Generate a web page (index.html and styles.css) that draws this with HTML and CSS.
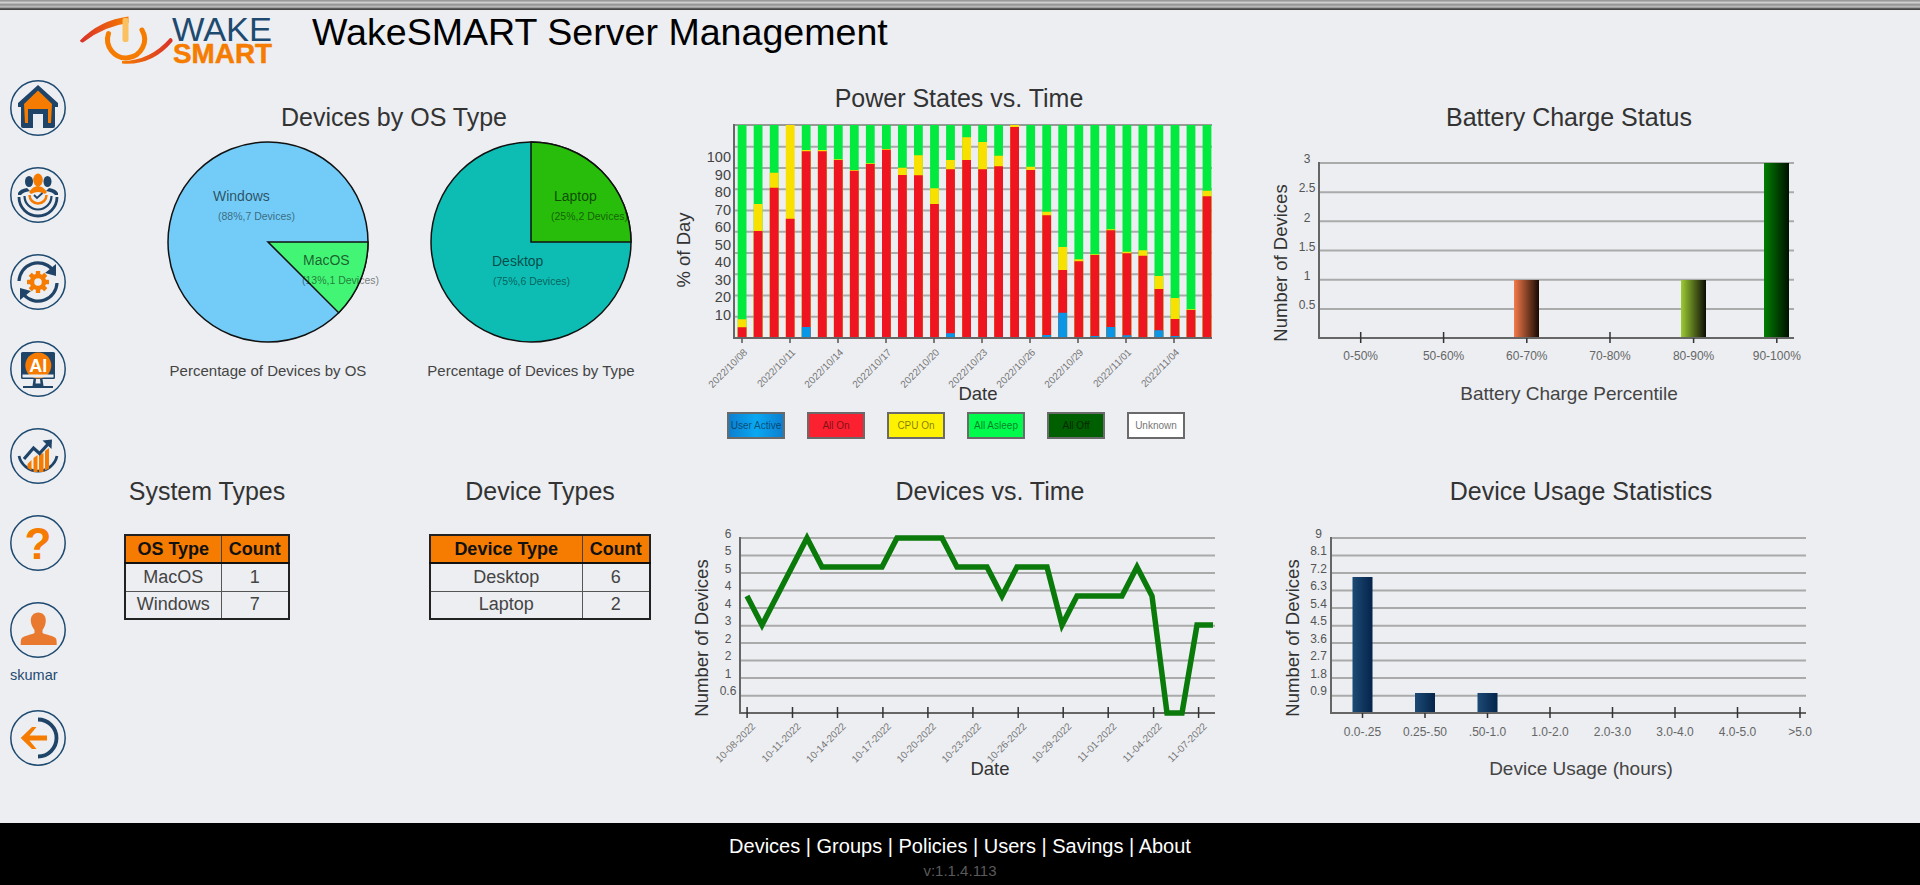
FILE: index.html
```html
<!DOCTYPE html>
<html lang="en">
<head>
<meta charset="utf-8">
<title>WakeSMART Server Management</title>
<link rel="stylesheet" href="styles.css">
</head>
<body>
<div class="page">
  <div class="topbar"></div>
  <header class="header">
    <svg class="logo" viewBox="78 10 196 60" aria-label="WakeSMART logo">
      <defs>
        <linearGradient id="swoosh" x1="0" x2="1" y1="0" y2="0"><stop offset="0" stop-color="#d9302a"/><stop offset="1" stop-color="#f57c00"/></linearGradient>
        <linearGradient id="tail" x1="0" x2="1" y1="0" y2="0"><stop offset="0" stop-color="#f57c00"/><stop offset="1" stop-color="#d9302a"/></linearGradient>
      </defs>
      <path d="M80 40.5Q100 20 128.5 16.500L128.500 23Q104 26 83 42.500Q80.500 43 80 40.500Z" fill="url(#swoosh)"/>
      <path d="M108.500 33.500A18.500 18.500 0 1 0 142 30" fill="none" stroke="#f57c00" stroke-width="5" stroke-linecap="round"/>
      <path d="M122 61Q150 61 170 38Q173 38 172.500 41.500Q152 66 122 63.500Z" fill="url(#tail)"/>
      <rect x="122.500" y="18" width="6" height="24" rx="2" fill="#fbc060"/>
      <text class="logo-wake" x="172" y="41" textLength="100" lengthAdjust="spacingAndGlyphs">WAKE</text>
      <text class="logo-smart" x="173" y="63" textLength="99" lengthAdjust="spacingAndGlyphs">SMART</text>
    </svg>
    <h1 class="app-title">WakeSMART Server Management</h1>
  </header>

  <div class="main">
    <nav class="sidebar">
      <a class="nav-item" href="#"><svg class="nav-icon" viewBox="0 0 56 56">
        <circle class="ring" cx="28" cy="28" r="27.200"/>
        <path class="ink" d="M28 5L48 23V27H45V46Q45 48 43 48H13Q11 48 11 46V27H8V23Z"/>
        <path class="accent" d="M28 10.500L42 24L41 43H15L14 24Z"/>
        <path class="ink" d="M18 48V29H38V48Z"/>
        <rect class="paper" x="23" y="34" width="10" height="14"/>
      </svg></a>
      <a class="nav-item" href="#"><svg class="nav-icon" viewBox="0 0 56 56">
        <circle class="ring" cx="28" cy="28" r="27.200"/>
        <ellipse class="ink" cx="19" cy="14.500" rx="4" ry="5.500"/>
        <ellipse class="ink" cx="37.500" cy="14.500" rx="4" ry="5.500"/>
        <path class="ink" d="M8 26Q10 22 17 21L20 24Q13 25 11 28H8ZM48 26Q46 22 39 21L36 24Q43 25 45 28H48Z"/>
        <ellipse class="accent" cx="28" cy="13" rx="4.800" ry="6.500"/>
        <path class="accent" d="M19 25Q23 19 28 19Q33 19 37 25L35 27Q28 23 21 27Z"/>
        <path class="line-accent" d="M19.500 28A8.500 8.500 0 0 0 36.500 28"/>
        <path class="line-thin" d="M14.500 29A13.500 13.500 0 0 0 41.500 29"/>
        <path class="line-ink" d="M9 30A19 19 0 0 0 47 30"/>
        <path class="line-check" d="M24 28L27 31L32.500 26"/>
      </svg></a>
      <a class="nav-item" href="#"><svg class="nav-icon" viewBox="0 0 56 56">
        <circle class="ring" cx="28" cy="28" r="27.200"/>
        <path class="line-ink-m" d="M9 27A19 19 0 0 1 42 15"/>
        <path class="ink" d="M46 10L46 22L35 19Z"/>
        <path class="line-ink-m" d="M47 29A19 19 0 0 1 14 41"/>
        <path class="ink" d="M10 46L10 34L21 37Z"/>
        <g class="accent">
          <rect x="25.800" y="17" width="4.400" height="22" rx="0.500"/>
          <rect x="25.800" y="17" width="4.400" height="22" rx="0.500" transform="rotate(45 28 28)"/>
          <rect x="25.800" y="17" width="4.400" height="22" rx="0.500" transform="rotate(90 28 28)"/>
          <rect x="25.800" y="17" width="4.400" height="22" rx="0.500" transform="rotate(135 28 28)"/>
        </g>
        <circle class="gear-body" cx="28" cy="28" r="6"/>
      </svg></a>
      <a class="nav-item" href="#"><svg class="nav-icon" viewBox="0 0 56 56">
        <circle class="ring" cx="28" cy="28" r="27.200"/>
        <rect class="ink" x="11" y="11" width="34" height="27" rx="1.500"/>
        <circle class="accent" cx="28.300" cy="24.500" r="13"/>
        <rect class="paper" x="12.500" y="33.500" width="31" height="3"/>
        <text class="ai-text" x="28.300" y="31">AI</text>
        <path class="ink" d="M23.500 38H26L25.500 42.500H30.500L30 38H32.500L33.500 45H22.500Z"/>
        <rect class="ink" x="13" y="45" width="30" height="2"/>
      </svg></a>
      <a class="nav-item" href="#"><svg class="nav-icon" viewBox="0 0 56 56">
        <circle class="ring" cx="28" cy="28" r="27.200"/>
        <path class="line-ink" d="M9 28A19.500 19.500 0 0 0 47 28"/>
        <path class="accent" d="M17.500 36L21.500 32V42.500L17.500 40ZM23.500 30L27.500 27V44H23.500ZM29 27L33.500 25V44L29 44ZM35 23L39 20V40.500L35 42.500Z"/>
        <path class="line-ink-m" d="M14 31L23.500 20L29.500 25.500L39 15"/>
        <path class="ink" d="M32.500 12.500L42 11.500L41.500 21Z"/>
      </svg></a>
      <a class="nav-item" href="#"><svg class="nav-icon" viewBox="0 0 56 56">
        <circle class="ring" cx="28" cy="28" r="27.200"/>
        <text class="q-text" x="28" y="44">?</text>
      </svg></a>
      <div class="nav-user">
        <a class="nav-item" href="#"><svg class="nav-icon" viewBox="0 0 56 56">
          <circle class="ring" cx="28" cy="28" r="27.200"/>
          <path class="person" d="M28.300 10.500C33 10.500 36 14 35.800 19C35.600 23 34 26 32.500 28V31C36 33 44 33.500 46 36.500C46.700 38 46.700 41 46.700 43H10.700C10.700 41 10.700 38 11.500 36.500C13.500 33.500 21 33 24.500 31V28C23 26 21 23 20.800 19C20.600 14 23.600 10.500 28.300 10.500Z"/>
        </svg></a>
        <span class="user-name">skumar</span>
      </div>
      <a class="nav-item" href="#"><svg class="nav-icon" viewBox="0 0 56 56">
        <circle class="ring" cx="28" cy="28" r="27.200"/>
        <path class="line-ink-arc" d="M28 9.500A18.500 18.500 0 0 1 28 46.500"/>
        <path class="accent" d="M10.700 28L22 17H26.500L19.500 25.500H37V30.500H19.500L26.500 39H22Z"/>
      </svg></a>
    </nav>

    <div class="content">
      <section class="row row-top">
        <svg class="chart chart-pies" viewBox="110 80 570 390">
          <text class="chart-title" x="394" y="126">Devices by OS Type</text>
          <circle class="pie-edge pie-win" cx="268" cy="242" r="100"/>
          <path class="pie-edge pie-mac" d="M268 242H368A100 100 0 0 1 338.700 312.700Z"/>
          <text class="pie-label" x="213" y="201">Windows</text>
          <text class="pie-sub" x="218" y="220">(88%,7 Devices)</text>
          <text class="pie-label" x="303" y="265">MacOS</text>
          <text class="pie-sub" x="302" y="284">(13%,1 Devices)</text>
          <text class="pie-caption" x="268" y="376">Percentage of Devices by OS</text>
          <circle class="pie-edge pie-desk" cx="531" cy="242" r="100"/>
          <path class="pie-edge pie-lap" d="M531 242V142A100 100 0 0 1 631 242Z"/>
          <text class="pie-label" x="554" y="201">Laptop</text>
          <text class="pie-sub" x="551" y="220">(25%,2 Devices)</text>
          <text class="pie-label" x="492" y="266">Desktop</text>
          <text class="pie-sub" x="493" y="285">(75%,6 Devices)</text>
          <text class="pie-caption" x="531" y="376">Percentage of Devices by Type</text>
        </svg>

        <div class="power-panel">
          <svg class="chart chart-power" viewBox="680 80 570 326">
            <text class="chart-title" x="959" y="107">Power States vs. Time</text>
            <path class="grid" d="M734 146.700H1212M734 168H1212M734 189.200H1212M734 210.500H1212M734 231.700H1212M734 253H1212M734 274.200H1212M734 295.500H1212M734 316.700H1212"/>
            <path class="axis-soft" d="M734 125H1212"/>
            <path class="seg-green" d="M737.700 125h8.800V337h-8.800zM753.700 125h8.800V337h-8.800zM769.800 125h8.800V337h-8.800zM801.800 125h8.800V337h-8.800zM817.900 125h8.800V337h-8.800zM833.900 125h8.800V337h-8.800zM849.900 125h8.800V337h-8.800zM865.900 125h8.800V337h-8.800zM882 125h8.800V337h-8.800zM898 125h8.800V337h-8.800zM914 125h8.800V337h-8.800zM930.100 125h8.800V337h-8.800zM946.100 125h8.800V337h-8.800zM962.200 125h8.800V337h-8.800zM978.200 125h8.800V337h-8.800zM994.200 125h8.800V337h-8.800zM1026.300 125h8.800V337h-8.800zM1042.300 125h8.800V337h-8.800zM1058.300 125h8.800V337h-8.800zM1074.400 125h8.800V337h-8.800zM1090.400 125h8.800V337h-8.800zM1106.400 125h8.800V337h-8.800zM1122.500 125h8.800V337h-8.800zM1138.500 125h8.800V337h-8.800zM1154.500 125h8.800V337h-8.800zM1170.600 125h8.800V337h-8.800zM1186.600 125h8.800V337h-8.800zM1202.600 125h8.800V337h-8.800z"/>
            <path class="seg-yellow" d="M737.700 319.300h8.800V337h-8.800zM753.700 204h8.800V337h-8.800zM769.800 172.700h8.800V337h-8.800zM785.800 125h8.800V337h-8.800zM801.800 150h8.800V337h-8.800zM817.900 150h8.800V337h-8.800zM833.900 159.300h8.800V337h-8.800zM849.900 170h8.800V337h-8.800zM865.900 163.300h8.800V337h-8.800zM882 149h8.800V337h-8.800zM898 167.700h8.800V337h-8.800zM914 155.300h8.800V337h-8.800zM930.100 188.300h8.800V337h-8.800zM946.100 160h8.800V337h-8.800zM962.200 137.300h8.800V337h-8.800zM978.200 142h8.800V337h-8.800zM994.200 155.700h8.800V337h-8.800zM1010.200 125h8.800V337h-8.800zM1026.300 166.700h8.800V337h-8.800zM1042.300 211.700h8.800V337h-8.800zM1058.300 247h8.800V337h-8.800zM1074.400 259.300h8.800V337h-8.800zM1090.400 254.300h8.800V337h-8.800zM1106.400 229.300h8.800V337h-8.800zM1122.500 251.700h8.800V337h-8.800zM1138.500 250.300h8.800V337h-8.800zM1154.500 276h8.800V337h-8.800zM1170.600 298h8.800V337h-8.800zM1186.600 309.300h8.800V337h-8.800zM1202.600 190.700h8.800V337h-8.800z"/>
            <path class="seg-red" d="M737.700 327.300h8.800V337h-8.800zM753.700 231h8.800V337h-8.800zM769.800 187.700h8.800V337h-8.800zM785.800 218.700h8.800V337h-8.800zM801.800 151.300h8.800V337h-8.800zM817.900 151.300h8.800V337h-8.800zM833.900 160h8.800V337h-8.800zM849.900 170.700h8.800V337h-8.800zM865.900 164h8.800V337h-8.800zM882 149.700h8.800V337h-8.800zM898 175h8.800V337h-8.800zM914 175.300h8.800V337h-8.800zM930.100 204h8.800V337h-8.800zM946.100 169.300h8.800V337h-8.800zM962.200 160h8.800V337h-8.800zM978.200 169.300h8.800V337h-8.800zM994.200 166.300h8.800V337h-8.800zM1010.200 127h8.800V337h-8.800zM1026.300 170h8.800V337h-8.800zM1042.300 215.300h8.800V337h-8.800zM1058.300 270h8.800V337h-8.800zM1074.400 261.300h8.800V337h-8.800zM1090.400 255h8.800V337h-8.800zM1106.400 230.300h8.800V337h-8.800zM1122.500 253.300h8.800V337h-8.800zM1138.500 255.700h8.800V337h-8.800zM1154.500 289h8.800V337h-8.800zM1170.600 319h8.800V337h-8.800zM1186.600 310h8.800V337h-8.800zM1202.600 196.300h8.800V337h-8.800z"/>
            <path class="seg-blue" d="M801.800 327h8.800V337h-8.800zM946.100 333.300h8.800V337h-8.800zM1042.300 335h8.800V337h-8.800zM1058.300 312.700h8.800V337h-8.800zM1090.400 336h8.800V337h-8.800zM1106.400 327h8.800V337h-8.800zM1122.500 335.300h8.800V337h-8.800zM1154.500 330.300h8.800V337h-8.800zM1170.600 336h8.800V337h-8.800z"/>
            <path class="axis" d="M734 124V338H1212"/>
            <path class="tick" d="M742 338V343M790 338V343M838 338V343M886 338V343M934 338V343M982 338V343M1030 338V343M1078 338V343M1126 338V343M1174 338V343"/>
            <g class="y-num">
              <text x="731" y="162">100</text><text x="731" y="180">90</text><text x="731" y="197">80</text><text x="731" y="215">70</text><text x="731" y="232">60</text><text x="731" y="250">50</text><text x="731" y="267">40</text><text x="731" y="285">30</text><text x="731" y="302">20</text><text x="731" y="320">10</text>
            </g>
            <g class="tick-date">
              <text transform="translate(748 353) rotate(-45)">2022/10/08</text>
              <text transform="translate(796 353) rotate(-45)">2022/10/11</text>
              <text transform="translate(844 353) rotate(-45)">2022/10/14</text>
              <text transform="translate(892 353) rotate(-45)">2022/10/17</text>
              <text transform="translate(940 353) rotate(-45)">2022/10/20</text>
              <text transform="translate(988 353) rotate(-45)">2022/10/23</text>
              <text transform="translate(1036 353) rotate(-45)">2022/10/26</text>
              <text transform="translate(1084 353) rotate(-45)">2022/10/29</text>
              <text transform="translate(1132 353) rotate(-45)">2022/11/01</text>
              <text transform="translate(1180 353) rotate(-45)">2022/11/04</text>
            </g>
            <text class="axis-title" transform="translate(690 250) rotate(-90)">% of Day</text>
            <text class="axis-title" x="978" y="400">Date</text>
          </svg>
          <ul class="legend">
            <li class="legend-item key-blue">User Active</li>
            <li class="legend-item key-red">All On</li>
            <li class="legend-item key-yellow">CPU On</li>
            <li class="legend-item key-green">All Asleep</li>
            <li class="legend-item key-dark">All Off</li>
            <li class="legend-item key-white">Unknown</li>
          </ul>
        </div>

        <svg class="chart chart-battery" viewBox="1250 80 580 390">
          <defs>
            <linearGradient id="barOrange"><stop offset="0" stop-color="#f57a4a"/><stop offset="1" stop-color="#180a04"/></linearGradient>
            <linearGradient id="barLime"><stop offset="0" stop-color="#9ccc35"/><stop offset="1" stop-color="#0c0c04"/></linearGradient>
            <linearGradient id="barGreen"><stop offset="0" stop-color="#007f00"/><stop offset="1" stop-color="#001000"/></linearGradient>
          </defs>
          <text class="chart-title" x="1569" y="126">Battery Charge Status</text>
          <path class="grid" d="M1319 163H1794M1319 192.200H1794M1319 221.300H1794M1319 250.500H1794M1319 279.700H1794M1319 308.900H1794"/>
          <rect x="1514" y="280" width="25" height="58" fill="url(#barOrange)"/>
          <rect x="1681" y="280" width="25" height="58" fill="url(#barLime)"/>
          <rect x="1764" y="163" width="25" height="175" fill="url(#barGreen)"/>
          <path class="axis" d="M1319 162V338H1794"/>
          <path class="tick-dark" d="M1360.700 332V343M1443.600 332V343M1526.800 338V343M1610 332V343M1693.600 338V343M1776.800 338V343"/>
          <g class="y-small">
            <text x="1307" y="163">3</text><text x="1307" y="192">2.5</text><text x="1307" y="222">2</text><text x="1307" y="251">1.5</text><text x="1307" y="280">1</text><text x="1307" y="309">0.5</text>
          </g>
          <g class="x-small">
            <text x="1360.700" y="360">0-50%</text><text x="1443.600" y="360">50-60%</text><text x="1526.800" y="360">60-70%</text><text x="1610" y="360">70-80%</text><text x="1693.600" y="360">80-90%</text><text x="1776.800" y="360">90-100%</text>
          </g>
          <text class="axis-title" transform="translate(1287 263) rotate(-90)">Number of Devices</text>
          <text class="axis-note" x="1569" y="400">Battery Charge Percentile</text>
        </svg>
      </section>

      <section class="row row-bottom">
        <div class="table-panel panel-os">
          <h2 class="panel-title">System Types</h2>
          <table class="data-table table-os">
            <thead><tr><th class="col-name">OS Type</th><th>Count</th></tr></thead>
            <tbody>
              <tr><td>MacOS</td><td>1</td></tr>
              <tr><td>Windows</td><td>7</td></tr>
            </tbody>
          </table>
        </div>
        <div class="table-panel panel-device">
          <h2 class="panel-title">Device Types</h2>
          <table class="data-table table-device">
            <thead><tr><th class="col-name">Device Type</th><th>Count</th></tr></thead>
            <tbody>
              <tr><td>Desktop</td><td>6</td></tr>
              <tr><td>Laptop</td><td>2</td></tr>
            </tbody>
          </table>
        </div>

        <svg class="chart chart-devices" viewBox="680 470 570 353">
          <text class="chart-title" x="990" y="500">Devices vs. Time</text>
          <path class="grid" d="M740 538H1215M740 555.500H1215M740 573H1215M740 590.600H1215M740 608H1215M740 625.700H1215M740 643H1215M740 660.600H1215M740 678H1215M740 695.700H1215"/>
          <path class="axis" d="M740 537V713H1215"/>
          <path class="tick-dark" d="M747.100 707V718M792.500 707V718M837.500 707V718M882.900 707V718M927.900 707V718M972.900 707V718M1018.200 707V718M1063.200 707V718M1108.200 707V718M1153.600 707V718M1198.600 707V718"/>
          <polyline class="trend" points="747,596 762,625 777,596 792,567 807,538 822,567 837,567 852,567 867,567 882,567 897,538 912,538 927,538 942,538 957,567 972,567 987,567 1002,596 1017,567 1032,567 1047,567 1062,625 1077,596 1092,596 1107,596 1122,596 1137,567 1152,596 1167,713 1182,713 1197,625 1213,625"/>
          <g class="y-small">
            <text x="728" y="538">6</text><text x="728" y="555">5</text><text x="728" y="573">5</text><text x="728" y="590">4</text><text x="728" y="608">4</text><text x="728" y="625">3</text><text x="728" y="643">2</text><text x="728" y="660">2</text><text x="728" y="678">1</text><text x="728" y="695">0.6</text>
          </g>
          <g class="tick-date">
            <text transform="translate(756 727) rotate(-45)">10-08-2022</text>
            <text transform="translate(801.400 727) rotate(-45)">10-11-2022</text>
            <text transform="translate(846.400 727) rotate(-45)">10-14-2022</text>
            <text transform="translate(891.800 727) rotate(-45)">10-17-2022</text>
            <text transform="translate(936.800 727) rotate(-45)">10-20-2022</text>
            <text transform="translate(981.800 727) rotate(-45)">10-23-2022</text>
            <text transform="translate(1027.100 727) rotate(-45)">10-26-2022</text>
            <text transform="translate(1072.100 727) rotate(-45)">10-29-2022</text>
            <text transform="translate(1117.100 727) rotate(-45)">11-01-2022</text>
            <text transform="translate(1162.500 727) rotate(-45)">11-04-2022</text>
            <text transform="translate(1207.500 727) rotate(-45)">11-07-2022</text>
          </g>
          <text class="axis-title" transform="translate(708 638) rotate(-90)">Number of Devices</text>
          <text class="axis-title" x="990" y="775">Date</text>
        </svg>

        <svg class="chart chart-usage" viewBox="1250 470 580 353">
          <defs>
            <linearGradient id="barNavy"><stop offset="0" stop-color="#1c4a74"/><stop offset="1" stop-color="#05244a"/></linearGradient>
          </defs>
          <text class="chart-title" x="1581" y="500">Device Usage Statistics</text>
          <path class="grid" d="M1331 538H1806M1331 555.500H1806M1331 573H1806M1331 590.600H1806M1331 608H1806M1331 625.700H1806M1331 643H1806M1331 660.600H1806M1331 678H1806M1331 695.700H1806"/>
          <rect x="1352.500" y="577" width="20" height="136" fill="url(#barNavy)"/>
          <rect x="1415" y="693" width="20" height="20" fill="url(#barNavy)"/>
          <rect x="1477.500" y="693" width="20" height="20" fill="url(#barNavy)"/>
          <path class="axis" d="M1331 537V713H1806"/>
          <path class="tick-dark" d="M1362.500 713V718M1425 713V718M1487.500 713V718M1550 707V718M1612.500 707V718M1675 707V718M1737.500 707V718M1800 707V718"/>
          <g class="y-small">
            <text x="1318.500" y="538">9</text><text x="1318.500" y="555">8.1</text><text x="1318.500" y="573">7.2</text><text x="1318.500" y="590">6.3</text><text x="1318.500" y="608">5.4</text><text x="1318.500" y="625">4.5</text><text x="1318.500" y="643">3.6</text><text x="1318.500" y="660">2.7</text><text x="1318.500" y="678">1.8</text><text x="1318.500" y="695">0.9</text>
          </g>
          <g class="x-small">
            <text x="1362.500" y="736">0.0-.25</text><text x="1425" y="736">0.25-.50</text><text x="1487.500" y="736">.50-1.0</text><text x="1550" y="736">1.0-2.0</text><text x="1612.500" y="736">2.0-3.0</text><text x="1675" y="736">3.0-4.0</text><text x="1737.500" y="736">4.0-5.0</text><text x="1800" y="736">&gt;5.0</text>
          </g>
          <text class="axis-title" transform="translate(1299 638) rotate(-90)">Number of Devices</text>
          <text class="axis-note" x="1581" y="775">Device Usage (hours)</text>
        </svg>
      </section>
    </div>
  </div>

  <footer class="footer">
    <div class="footer-links">
      <a href="#">Devices</a> | <a href="#">Groups</a> | <a href="#">Policies</a> | <a href="#">Users</a> | <a href="#">Savings</a> | <a href="#">About</a>
    </div>
    <div class="version">v:1.1.4.113</div>
  </footer>
</div>
</body>
</html>
```
FILE: styles.css
```css
* { box-sizing: border-box; }

html, body {
  margin: 0;
  padding: 0;
}

body {
  background: #eceef2;
  color: #333;
  font-family: "Liberation Sans", Arial, sans-serif;
}

.page {
  width: 1920px;
  height: 885px;
  display: flex;
  flex-direction: column;
  overflow: hidden;
}

.topbar {
  flex: 0 0 10px;
  background: linear-gradient(to bottom, #8c8c8c 0, #bdbdbd 2px, #e0e0e0 3px, #8e8e8e 4px, #a8a8a8 6px, #c6c6c6 7px, #7a7a7a 8px, #3f3f3f 9px, #4a4a4a 10px);
}

.header {
  flex: 0 0 70px;
  display: flex;
  align-items: flex-start;
  padding-left: 78px;
}

.logo {
  width: 196px;
  height: 60px;
  flex: none;
}

.logo-wake {
  font-size: 34px;
  fill: #1f4a70;
}

.logo-smart {
  font-size: 28px;
  font-weight: 700;
  fill: #f57c00;
  stroke: #f57c00;
  stroke-width: 0.500;
}

.app-title {
  margin: 0 0 0 38px;
  font-size: 37.600px;
  line-height: 44px;
  font-weight: 400;
  color: #000;
}

.main {
  flex: 1;
  display: flex;
  min-height: 0;
}

.sidebar {
  flex: 0 0 110px;
  display: flex;
  flex-direction: column;
  align-items: flex-start;
  gap: 31px;
  padding-left: 10px;
}

.nav-item,
.nav-icon {
  display: block;
  width: 56px;
  height: 56px;
}

.nav-user {
  display: flex;
  flex-direction: column;
  margin-bottom: -3px;
}

.user-name {
  margin-top: 10px;
  font-size: 14.500px;
  line-height: 14px;
  color: #1f4a70;
}

.ring {
  fill: none;
  stroke: #1f4a70;
  stroke-width: 1.500;
}

.ink { fill: #1f4468; }
.accent { fill: #f57c00; }
.paper { fill: #e9edf1; }
.person { fill: #e8792e; }

.gear-body {
  fill: #eceef2;
  stroke: #f57c00;
  stroke-width: 4.500;
}

.line-ink,
.line-ink-m,
.line-ink-arc,
.line-thin,
.line-accent,
.line-check {
  fill: none;
}

.line-ink { stroke: #1f4468; stroke-width: 2.800; }
.line-ink-m { stroke: #1f4468; stroke-width: 3.200; }
.line-ink-arc { stroke: #1f4468; stroke-width: 3.800; }
.line-thin { stroke: #1f4468; stroke-width: 2.200; }
.line-accent { stroke: #f57c00; stroke-width: 2.500; }
.line-check { stroke: #1f4468; stroke-width: 1.800; }

.ai-text {
  font-size: 18px;
  font-weight: 700;
  fill: #fff;
  text-anchor: middle;
}

.q-text {
  font-size: 44px;
  font-weight: 700;
  fill: #f57c00;
  text-anchor: middle;
}

.content {
  flex: 1;
  display: flex;
  flex-direction: column;
  min-width: 0;
}

.row {
  display: flex;
  align-items: flex-start;
}

.row-top { flex: 0 0 390px; }
.row-bottom { flex: 1; }

.chart {
  display: block;
  flex: none;
  overflow: visible;
}

.chart-pies { width: 570px; height: 390px; }
.chart-power { width: 570px; height: 326px; }
.chart-battery { width: 580px; height: 390px; }
.chart-devices { width: 570px; height: 353px; margin-left: 20px; }
.chart-usage { width: 580px; height: 353px; }

.power-panel {
  width: 570px;
  flex: none;
}

.chart-title {
  font-size: 25px;
  fill: #333;
  text-anchor: middle;
}

.pie-edge {
  stroke: #111;
  stroke-width: 1.500;
}

.pie-win { fill: #72ccf7; }
.pie-mac { fill: #43f575; }
.pie-desk { fill: #0dbdb3; }
.pie-lap { fill: #28bd0a; }

.pie-label {
  font-size: 14px;
  fill: #000;
  fill-opacity: 0.62;
}

.pie-sub {
  font-size: 10.500px;
  fill: #000;
  fill-opacity: 0.5;
}

.pie-caption {
  font-size: 15px;
  fill: #444;
  text-anchor: middle;
}

.grid {
  fill: none;
  stroke: #aaa;
  stroke-width: 2;
}

.axis-soft {
  fill: none;
  stroke: #999;
  stroke-width: 2;
}

.axis {
  fill: none;
  stroke: #666;
  stroke-width: 2;
}

.tick {
  fill: none;
  stroke: #555;
  stroke-width: 1.500;
}

.tick-dark {
  fill: none;
  stroke: #333;
  stroke-width: 1.500;
}

.seg-green { fill: #03ea3e; }
.seg-yellow { fill: #f8e000; }
.seg-red { fill: #ee1520; }
.seg-blue { fill: #0a96e6; }

.y-num text {
  font-size: 14.500px;
  fill: #444;
  text-anchor: end;
}

.y-small text {
  font-size: 12px;
  fill: #555;
  text-anchor: middle;
}

.x-small text {
  font-size: 12px;
  fill: #666;
  text-anchor: middle;
}

.tick-date text {
  font-size: 10px;
  fill: #777;
  text-anchor: end;
}

.axis-title {
  font-size: 18.500px;
  fill: #333;
  text-anchor: middle;
}

.axis-note {
  font-size: 19px;
  fill: #444;
  text-anchor: middle;
}

.trend {
  fill: none;
  stroke: #0a7a0a;
  stroke-width: 5.500;
  stroke-linejoin: miter;
}

.legend {
  list-style: none;
  display: flex;
  gap: 22px;
  margin: 6px 0 0;
  padding: 0 0 0 47px;
}

.legend-item {
  width: 58px;
  height: 27px;
  border: 2.500px solid #6a6a6a;
  font-size: 10px;
  line-height: 23px;
  text-align: center;
  white-space: nowrap;
  color: rgba(0, 0, 0, 0.5);
}

.key-blue { background: linear-gradient(to right, #0c7fd0, #0aa8f2 50%, #0c7fd0); }
.key-red { background: #fb2130; }
.key-yellow { background: #fff200; }
.key-green { background: #00fb4c; }
.key-dark { background: #005f00; color: rgba(0, 0, 0, 0.6); }
.key-white { background: #fff; color: #777; }

.table-panel {
  flex: none;
}

.panel-os { width: 194px; }
.panel-device { width: 240px; margin-left: 116px; }

.panel-title {
  margin: 6px 0 28px;
  font-size: 25px;
  line-height: 30px;
  font-weight: 400;
  color: #333;
  text-align: center;
  white-space: nowrap;
}

.data-table {
  margin: 0 auto;
  border-collapse: collapse;
  table-layout: fixed;
  border: 2px solid #222;
  font-size: 18px;
  color: #444;
}

.table-os { width: 166px; }
.table-device { width: 222px; }
.table-os .col-name { width: 96px; }
.table-device .col-name { width: 152px; }

.data-table th,
.data-table td {
  height: 28px;
  padding: 0;
  text-align: center;
  font-weight: 400;
  white-space: nowrap;
}

.data-table th {
  background: #f57c00;
  font-weight: 700;
  color: #111;
  border-left: 1px solid #444;
  border-bottom: 2px solid #111;
}

.data-table td {
  border-left: 1px solid #555;
  border-bottom: 1px solid #555;
}

.table-os td:first-child,
.table-device td:first-child,
.data-table th:first-child {
  border-left: 0;
}

.footer {
  flex: 0 0 62px;
  background: #000;
  color: #fff;
  text-align: center;
  padding-top: 12px;
}

.footer-links {
  font-size: 20px;
  line-height: 22px;
}

.footer-links a {
  color: #fff;
  text-decoration: none;
}

.version {
  margin-top: 3px;
  font-size: 15px;
  line-height: 22px;
  color: #5a5a5a;
}
```
